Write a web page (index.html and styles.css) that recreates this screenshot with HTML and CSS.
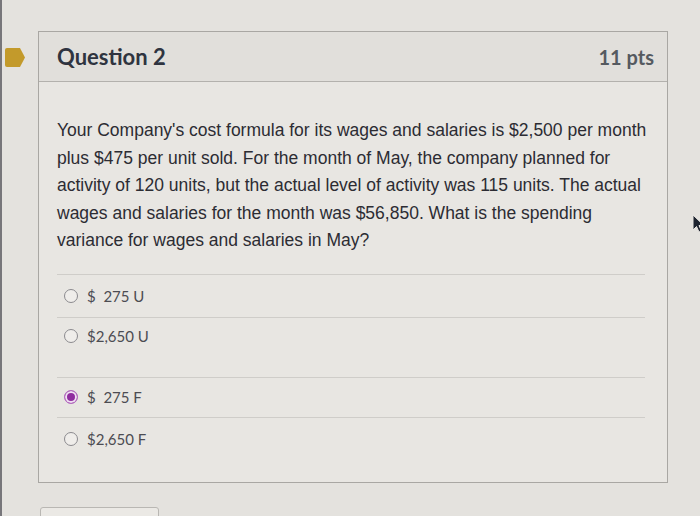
FILE: index.html
```html
<!DOCTYPE html>
<html>
<head>
<meta charset="utf-8">
<link rel="stylesheet" href="styles.css">
</head>
<body>
<div class="page">
  <div class="marker-col">
    <svg class="marker" width="22" height="19" viewBox="0 0 22 19"><path d="M1 2 Q1 0 3 0 H16 L21 9.5 L16 19 H3 Q1 19 1 17 Z" fill="#c39a2b"/></svg>
  </div>
  <div class="main-col">
    <div class="card">
      <div class="card-header">
        <h2 class="title">Question 2</h2>
        <span class="pts">11 pts</span>
      </div>
      <div class="card-body">
        <p class="question">Your Company's cost formula for its wages and salaries is $2,500 per month plus $475 per unit sold. For the month of May, the company planned for activity of 120 units, but the actual level of activity was 115 units. The actual wages and salaries for the month was $56,850. What is the spending variance for wages and salaries in May?</p>
        <div class="answers">
          <label class="answer"><span class="radio"></span><span class="answer-text">$&nbsp; 275 U</span></label>
          <label class="answer answer--tall"><span class="radio"></span><span class="answer-text">$2,650 U</span></label>
          <label class="answer answer--short"><span class="radio radio--checked"></span><span class="answer-text">$&nbsp; 275 F</span></label>
          <label class="answer"><span class="radio"></span><span class="answer-text">$2,650 F</span></label>
        </div>
      </div>
    </div>
    <div class="next-box"></div>
  </div>
  <svg class="cursor" width="14" height="20" viewBox="0 0 14 20"><path d="M1 1 L1 16 L4.5 12.5 L7 18 L9.5 17 L7 11.5 L12 11.5 Z" fill="#1e2430" stroke="#e8e6e2" stroke-width="1"/></svg>
</div>
</body>
</html>
```

FILE: styles.css
```css
html, body {
  margin: 0;
  padding: 0;
}
body {
  background: #e4e2de;
  width: 700px;
  height: 516px;
  overflow: hidden;
}
.page {
  position: relative;
  display: flex;
  height: 516px;
  box-sizing: border-box;
  border-left: 2px solid #77767a;
  padding-top: 31px;
}
.marker-col {
  width: 36px;
  flex: none;
}
.marker {
  display: block;
  margin-top: 17px;
  margin-left: 2px;
}
.main-col {
  display: flex;
  flex-direction: column;
}
.card {
  flex: none;
  width: 630px;
  height: 452px;
  box-sizing: border-box;
  border: 1px solid #a9a7a3;
  background: #e8e6e2;
}
.card-header {
  height: 50px;
  box-sizing: border-box;
  border-bottom: 1px solid #b3b1ad;
  background: #e1dfdb;
  display: flex;
  align-items: center;
  justify-content: space-between;
  padding: 0 13px 0 18px;
}
.title {
  margin: 0;
  font-family: Lato, "Open Sans", sans-serif;
  font-weight: 700;
  font-size: 22px;
  color: #2f3440;
}
.pts {
  font-family: Lato, "Open Sans", sans-serif;
  font-weight: 700;
  font-size: 20px;
  color: #555a60;
}
.card-body {
  padding: 0 22px 0 18px;
}
.question {
  margin: 35px 0 19px;
  width: 594px;
  font-family: "Liberation Sans", Arial, sans-serif;
  font-size: 17.5px;
  line-height: 27.5px;
  color: #2c2c33;
}
.answers {
  display: flex;
  flex-direction: column;
}
.answer {
  display: flex;
  align-items: center;
  border-top: 1px solid #cfcdc9;
  padding: 11px 0 11px 7px;
  line-height: 20px;
  font-family: Lato, "Open Sans", sans-serif;
  font-size: 15px;
  color: #4c4c52;
}
.answer--tall {
  padding-top: 8px;
  padding-bottom: 31px;
}
.answer--short {
  padding-top: 9px;
  padding-bottom: 10px;
}
.radio {
  width: 12px;
  height: 12px;
  border: 1px solid #8b8a8e;
  border-radius: 50%;
  box-sizing: content-box;
  background: #efedea;
  margin-right: 9px;
  flex: none;
}
.radio--checked {
  border-color: #b46cc0;
  background: #8f2c9f;
  box-shadow: inset 0 0 0 2px #f0dff2;
}
.next-box {
  flex: none;
  margin-top: 24px;
  margin-left: 2px;
  width: 117px;
  height: 22px;
  border: 1px solid #b9b7b3;
  border-radius: 3px;
  background: #ebe9e5;
}
.cursor {
  position: absolute;
  left: 690px;
  top: 214px;
}
```
